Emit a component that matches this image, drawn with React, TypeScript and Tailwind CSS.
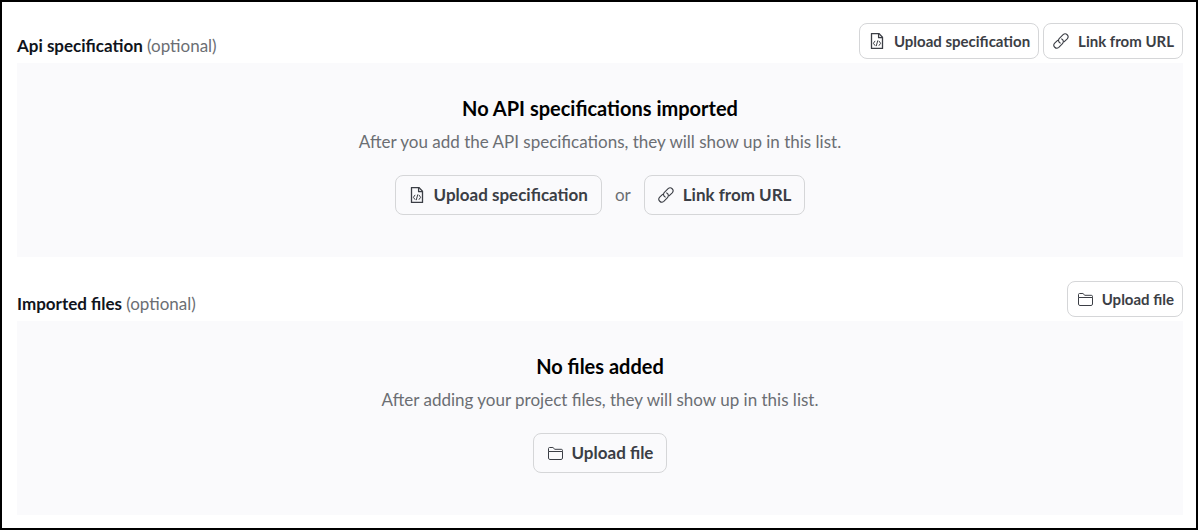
import React from 'react'
import clsx from 'clsx'

type IconProps = {className?: string}

function CodeFileIcon({className}: IconProps) {
  return (
    <svg viewBox="0 0 16 16" fill="none" stroke="currentColor" strokeLinejoin="round" className={className} aria-hidden="true">
      <path d="M2.5 .6h7.6l3.4 3.6v11.2h-11z" strokeWidth="1.3" />
      <path d="M9.6 .7v4h3.9" strokeWidth="1.3" />
      <path d="M5.9 8.2 4.4 10.3l1.5 2.1M10.1 8.2l1.5 2.1-1.5 2.1M8.7 7.8l-1.4 5" strokeWidth="1" strokeLinecap="round" />
    </svg>
  )
}

function LinkIcon({className}: IconProps) {
  return (
    <svg viewBox="0 0 16 16" fill="none" stroke="currentColor" strokeLinecap="round" className={className} aria-hidden="true">
      <path d="M7.2 10.1a2.9 2.9 0 0 1-.8-4.7l3.7-3.7a2.9 2.9 0 0 1 4.1 4.1l-2.9 2.9" strokeWidth="1.1" />
      <path d="M8.7 5.9a2.9 2.9 0 0 1 .8 4.7l-3.7 3.7a2.9 2.9 0 0 1-4.1-4.1l2.9-2.9" strokeWidth="1.1" />
    </svg>
  )
}

function FolderIcon({className}: IconProps) {
  return (
    <svg viewBox="0 0 16 16" fill="none" stroke="currentColor" strokeLinejoin="round" className={className} aria-hidden="true">
      <path d="M1.5 6.5V3.5c0-.6.4-1 1-1h3.4l2 1.8h6.4c.7 0 1.2.4 1.2 1v1.2" />
      <path d="M1.5 6.5h14v6.6c0 .8-.6 1.4-1.4 1.4H2.9c-.8 0-1.4-.6-1.4-1.4z" />
    </svg>
  )
}

type ActionButtonProps = {
  icon: React.ComponentType<IconProps>
  label: string
  small?: boolean
}

function ActionButton({icon: Icon, label, small}: ActionButtonProps) {
  return (
    <button
      type="button"
      className={clsx(
        'flex items-center rounded-lg border border-[#d5d6d8] font-bold text-[#3b3e45] hover:bg-gray-100',
        small ? 'h-9 gap-[9px] bg-white pr-2 pl-[9px] text-[15px]' : 'h-10 gap-[9px] px-[13px] text-[17px]',
      )}
    >
      <Icon className="size-4 shrink-0" />
      {label}
    </button>
  )
}

type SectionProps = {
  label: string
  title: string
  description: string
  actions: ActionButtonProps[]
}

function ImportSection({label, title, description, actions}: SectionProps) {
  return (
    <section>
      <div className="flex items-end justify-between gap-4">
        <h2 className="text-[17px] leading-[26px] font-bold text-[#10141c]">
          {label} <span className="font-normal text-[#6b6e73]">(optional)</span>
        </h2>
        <div className="flex gap-1">
          {actions.map(action => (
            <ActionButton key={action.label} {...action} small />
          ))}
        </div>
      </div>

      <div className="mt-1 flex flex-col items-center bg-[#fafafc] px-4 pt-8 pb-[42px] text-center">
        <h3 className="text-[20px] leading-[26px] font-bold text-black">{title}</h3>
        <p className="mt-2 text-[17px] leading-[26px] text-[#6b6e73]">{description}</p>
        <div className="mt-5 flex items-center gap-[13px]">
          {actions.map((action, i) => (
            <React.Fragment key={action.label}>
              {i > 0 && <span className="text-[17px] text-[#6b6e73]">or</span>}
              <ActionButton {...action} />
            </React.Fragment>
          ))}
        </div>
      </div>
    </section>
  )
}

export default function App() {
  return (
    <main className="flex min-h-screen flex-col gap-6 border-2 border-black bg-white pt-[21px] pr-[13px] pb-[13px] pl-[15px] font-[Lato,sans-serif]">
      <ImportSection
        label="Api specification"
        title="No API specifications imported"
        description="After you add the API specifications, they will show up in this list."
        actions={[
          {icon: CodeFileIcon, label: 'Upload specification'},
          {icon: LinkIcon, label: 'Link from URL'},
        ]}
      />
      <ImportSection
        label="Imported files"
        title="No files added"
        description="After adding your project files, they will show up in this list."
        actions={[{icon: FolderIcon, label: 'Upload file'}]}
      />
    </main>
  )
}
